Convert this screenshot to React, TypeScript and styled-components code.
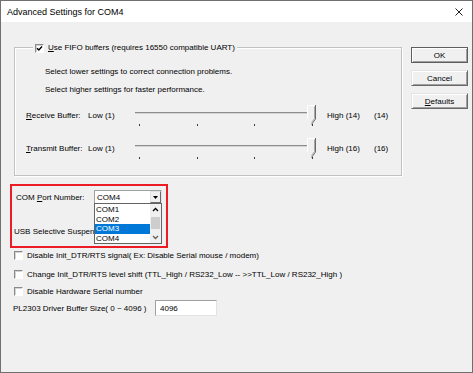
import React from "react";
import styled, { createGlobalStyle } from "styled-components";

const GlobalStyle = createGlobalStyle`
  html, body {
    margin: 0;
    background: #fff;
  }
  body {
    font-family: "Liberation Sans", Arial, sans-serif;
    font-size: 8px;
    color: #000;
  }
`;

const Window = styled.div`
  width: 473px;
  height: 373px;
  box-sizing: border-box;
  border: 1px solid #707070;
  display: flex;
  flex-direction: column;
  background: #f0f0f0;
  overflow: hidden;
`;

const TitleBar = styled.div`
  height: 21px;
  flex: none;
  background: #fff;
  display: flex;
  align-items: center;
  justify-content: space-between;
  padding: 0 9px 0 6px;
  font-size: 9px;
`;

const Body = styled.div`
  flex: 1;
  display: flex;
  flex-direction: column;
  padding-left: 9px;
`;

const TopRow = styled.div`
  display: flex;
  align-items: flex-start;
  margin-top: 25px;
`;

const GroupBox = styled.div`
  margin-left: 4px;
  width: 388px;
  height: 129px;
  box-sizing: border-box;
  border: 1px solid #c2c2c2;
  box-shadow: 1px 1px 0 #fff, inset 1px 1px 0 #fff;
  display: flex;
  flex-direction: column;
`;

const Legend = styled.div`
  align-self: flex-start;
  display: flex;
  align-items: center;
  gap: 4px;
  height: 10px;
  line-height: 10px;
  margin: -5px 0 0 18px;
  padding: 0 2px;
  background: #f0f0f0;
`;

const Hint = styled.div<{ $top: number }>`
  margin: ${(p) => p.$top}px 0 0 30px;
  line-height: 10px;
`;

const SliderRow = styled.div<{ $top: number }>`
  display: grid;
  grid-template-columns: 62px 45px 194px 47px auto;
  align-items: center;
  height: 20px;
  margin: ${(p) => p.$top}px 0 0 11px;
  white-space: nowrap;
`;

const Slider = styled.div`
  position: relative;
  width: 185px;
  height: 20px;
`;

const Track = styled.div`
  margin: 7px 0 0 2px;
  width: 180px;
  height: 1px;
  border-top: 1px solid #8d8d8d;
  background: #d4d4d4;
`;

const Ticks = styled.div`
  display: flex;
  justify-content: space-between;
  margin: 10px 0 0 6px;
  width: 174px;
`;

const Tick = styled.span`
  width: 1px;
  height: 2px;
  background: #3c3c3c;
`;

const Thumb = styled.svg`
  position: absolute;
  left: 174px;
  top: 0;
`;

const ButtonColumn = styled.div`
  margin-left: 9px;
  display: flex;
  flex-direction: column;
  gap: 7px;
`;

const Button = styled.button<{ $default?: boolean }>`
  width: 57px;
  height: 16px;
  padding: 0;
  font: inherit;
  color: #000;
  background: #f0f0f0;
  border: 1px solid;
  border-color: ${(p) =>
    p.$default ? "#5e5e5e" : "#e3e3e3 #696969 #696969 #e3e3e3"};
  box-shadow: inset 1px 1px 0 #fff, inset -1px -1px 0 #a0a0a0;
`;

const Highlight = styled.div`
  margin-top: 8px;
  width: 158px;
  height: 64px;
  box-sizing: border-box;
  border: 2px solid #ec1c24;
  padding: 4px 0 0 4px;
  display: flex;
  flex-direction: column;
`;

const PortRow = styled.div`
  display: flex;
  align-items: center;
  height: 14px;
`;

const PortLabel = styled.span`
  width: 78px;
`;

const Combo = styled.div`
  position: relative;
  width: 68px;
  height: 14px;
  box-sizing: border-box;
  border: 1px solid;
  border-color: #a0a0a0 #e3e3e3 #e3e3e3 #a0a0a0;
  background: #fff;
  display: flex;
  align-items: center;
  padding-left: 2px;
`;

const ComboValue = styled.span`
  flex: 1;
`;

const ComboButton = styled.span`
  width: 11px;
  height: 12px;
  box-sizing: border-box;
  border: 1px solid;
  border-color: #e3e3e3 #696969 #696969 #e3e3e3;
  background: #f0f0f0;
  display: flex;
  align-items: center;
  justify-content: center;
`;

const DropList = styled.div`
  position: absolute;
  top: 100%;
  left: -1px;
  width: 68px;
  height: 41px;
  box-sizing: border-box;
  border: 1px solid #646464;
  background: #fff;
  display: flex;
  z-index: 2;
`;

const Items = styled.div`
  flex: 1;
  padding-top: 1px;
`;

const Item = styled.div<{ $selected?: boolean }>`
  height: 9.5px;
  line-height: 9.5px;
  padding-left: 1px;
  background: ${(p) => (p.$selected ? "#0078d7" : "transparent")};
  color: ${(p) => (p.$selected ? "#fff" : "#000")};
`;

const ScrollBar = styled.div`
  width: 11px;
  background: #f0f0f0;
  display: flex;
  flex-direction: column;
  align-items: center;
`;

const ScrollArrow = styled.div`
  height: 11px;
  display: flex;
  align-items: center;
  justify-content: center;
`;

const ScrollThumb = styled.div`
  margin-top: 2px;
  width: 9px;
  height: 12px;
  background: #cdcdcd;
`;

const ScrollSpacer = styled.div`
  flex: 1;
`;

/* the open list hides the rest of this label, so it is clipped at the list edge */
const UsbText = styled.div`
  margin: 23px 0 0 -2px;
  width: 80px;
  line-height: 10px;
  white-space: nowrap;
  overflow: hidden;
`;

const CheckRow = styled.div<{ $top: number }>`
  display: flex;
  align-items: center;
  gap: 4px;
  height: 10px;
  margin: ${(p) => p.$top}px 0 0 4px;
  white-space: nowrap;
`;

const CheckBox = styled.span`
  width: 9px;
  height: 9px;
  box-sizing: border-box;
  border: 1px solid;
  border-color: #8a8a8a #fff #fff #8a8a8a;
  box-shadow: inset 1px 1px 0 #d4d4d4;
  background: #fff;
  display: flex;
  align-items: center;
  justify-content: center;
  flex: none;
`;

const SizeRow = styled.div`
  display: flex;
  align-items: center;
  height: 16px;
  margin: 4px 0 0 3px;
`;

const SizeLabel = styled.span`
  width: 142px;
  white-space: nowrap;
`;

const SizeInput = styled.input`
  width: 62px;
  height: 16px;
  box-sizing: border-box;
  border: 1px solid;
  border-color: #a0a0a0 #e3e3e3 #e3e3e3 #a0a0a0;
  padding: 0 0 0 4px;
  font: inherit;
  color: #000;
  background: #fff;
  outline: none;
`;

const CloseIcon = () => (
  <svg width="8" height="8" viewBox="0 0 8 8">
    <path d="M0.5 0.5 L7.5 7.5 M7.5 0.5 L0.5 7.5" stroke="#222" strokeWidth="1" />
  </svg>
);

const CheckMark = () => (
  <svg width="7" height="7" viewBox="0 0 7 7">
    <path d="M1 3.2 L2.8 5 L6 1.5" stroke="#000" strokeWidth="1.4" fill="none" />
  </svg>
);

const ThumbShape = () => (
  <Thumb width="10" height="20" viewBox="0 0 10 20">
    <polygon points="0.5,0.5 8.5,0.5 8.5,14 4.5,19 0.5,14" fill="#f0f0f0" />
    <polyline points="0.5,14 0.5,0.5 8,0.5" stroke="#fff" fill="none" />
    <polyline points="8.5,0 8.5,14 4.5,19.5" stroke="#6a6a6a" fill="none" />
    <polyline points="7.5,1.5 7.5,13.5 4.5,17.5" stroke="#a8a8a8" fill="none" />
  </Thumb>
);

const BufferSlider = () => (
  <Slider>
    <Track />
    <Ticks>
      <Tick />
      <Tick />
      <Tick />
      <Tick />
    </Ticks>
    <ThumbShape />
  </Slider>
);

const Chevron = ({ up, color }: { up?: boolean; color: string }) => (
  <svg width="7" height="5" viewBox="0 0 7 5">
    <path
      d={up ? "M1 4 L3.5 1.5 L6 4" : "M1 1 L3.5 3.5 L6 1"}
      stroke={color}
      strokeWidth="1.3"
      fill="none"
    />
  </svg>
);

const ports = ["COM1", "COM2", "COM3", "COM4"];

export default function App() {
  return (
    <>
      <GlobalStyle />
      <Window>
        <TitleBar>
          <span>Advanced Settings for COM4</span>
          <CloseIcon />
        </TitleBar>
        <Body>
          <TopRow>
            <GroupBox>
              <Legend>
                <CheckBox>
                  <CheckMark />
                </CheckBox>
                <span>
                  <u>U</u>se FIFO buffers (requires 16550 compatible UART)
                </span>
              </Legend>
              <Hint $top={14}>Select lower settings to correct connection problems.</Hint>
              <Hint $top={8}>Select higher settings for faster performance.</Hint>
              <SliderRow $top={10}>
                <span>
                  <u>R</u>eceive Buffer:
                </span>
                <span>Low (1)</span>
                <BufferSlider />
                <span>High (14)</span>
                <span>(14)</span>
              </SliderRow>
              <SliderRow $top={13}>
                <span>
                  <u>T</u>ransmit Buffer:
                </span>
                <span>Low (1)</span>
                <BufferSlider />
                <span>High (16)</span>
                <span>(16)</span>
              </SliderRow>
            </GroupBox>
            <ButtonColumn>
              <Button $default>OK</Button>
              <Button>Cancel</Button>
              <Button>
                <u>D</u>efaults
              </Button>
            </ButtonColumn>
          </TopRow>

          <Highlight>
            <PortRow>
              <PortLabel>
                COM <u>P</u>ort Number:
              </PortLabel>
              <Combo>
                <ComboValue>COM4</ComboValue>
                <ComboButton>
                  <svg width="5" height="3" viewBox="0 0 5 3">
                    <polygon points="0,0 5,0 2.5,3" fill="#000" />
                  </svg>
                </ComboButton>
                <DropList>
                  <Items>
                    {ports.map((p) => (
                      <Item key={p} $selected={p === "COM3"}>
                        {p}
                      </Item>
                    ))}
                  </Items>
                  <ScrollBar>
                    <ScrollArrow>
                      <Chevron up color="#000" />
                    </ScrollArrow>
                    <ScrollThumb />
                    <ScrollSpacer />
                    <ScrollArrow>
                      <Chevron color="#606060" />
                    </ScrollArrow>
                  </ScrollBar>
                </DropList>
              </Combo>
            </PortRow>
            <UsbText>USB Selective Suspend</UsbText>
          </Highlight>

          <CheckRow $top={2}>
            <CheckBox />
            <span>Disable Init_DTR/RTS signal( Ex: Disable Serial mouse / modem)</span>
          </CheckRow>
          <CheckRow $top={9}>
            <CheckBox />
            <span>
              Change Init_DTR/RTS level shift (TTL_High / RS232_Low -- &gt;&gt;TTL_Low / RS232_High )
            </span>
          </CheckRow>
          <CheckRow $top={7}>
            <CheckBox />
            <span>Disable Hardware Serial number</span>
          </CheckRow>
          <SizeRow>
            <SizeLabel>PL2303 Driver Buffer Size( 0 ~ 4096 )</SizeLabel>
            <SizeInput defaultValue="4096" readOnly />
          </SizeRow>
        </Body>
      </Window>
    </>
  );
}
